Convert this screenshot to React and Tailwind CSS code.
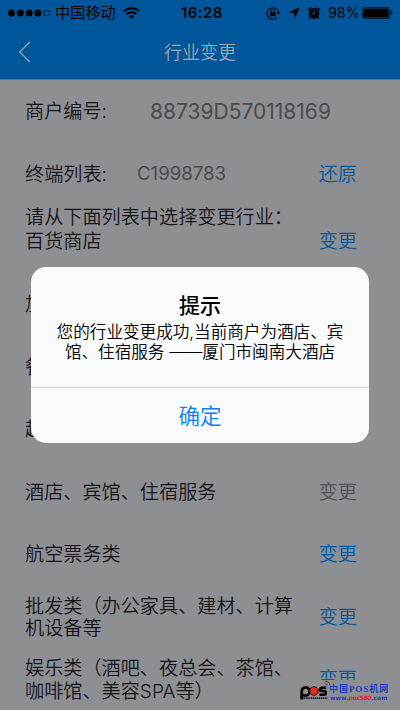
const industries = [
  { name: "加油站" },
  { name: "餐饮类" },
  { name: "超市类" },
  { name: "酒店、宾馆、住宿服务", current: true },
  { name: "航空票务类" },
  { name: "批发类（办公家具、建材、计算机设备等" },
  { name: "娱乐类（酒吧、夜总会、茶馆、咖啡馆、美容SPA等）" },
];

function StatusBar() {
  return (
    <div className="relative h-[26px] flex items-center justify-between pl-[8px] pr-[7px] text-black">
      <div className="flex items-center">
        <svg width="44" height="10" viewBox="0 0 44 10">
          <circle cx="3.5" cy="5" r="3.5" />
          <circle cx="12.3" cy="5" r="3.5" />
          <circle cx="21.1" cy="5" r="3.5" />
          <circle cx="29.9" cy="5" r="3.5" />
          <circle cx="38.7" cy="5" r="3" fill="none" stroke="black" strokeWidth="0.8" />
        </svg>
        <span className="ml-[3px] text-[15.2px] leading-[26px]">中国移动</span>
        <svg className="ml-[7px]" width="17" height="12" viewBox="0 0 17 12" fill="none" stroke="black" strokeWidth="2">
          <path d="M1 4.4a10.6 10.6 0 0 1 15 0" />
          <path d="M3.7 7.2a6.8 6.8 0 0 1 9.6 0" />
          <path d="M8.5 11.8 5.9 9.2a3.7 3.7 0 0 1 5.2 0z" fill="black" stroke="none" />
        </svg>
      </div>
      <span className="absolute left-[181px] font-semibold text-[15px] leading-[26px] tracking-[0.4px]">16:28</span>
      <div className="flex items-center">
        <svg width="15" height="14" viewBox="0 0 15 14" fill="none" stroke="black" strokeWidth="1.1">
          <path d="M10.8 11.4A5.7 5.7 0 1 1 12.3 6.2" />
          <path d="M10.2 6.2h4.4l-2.2 2.8z" fill="black" stroke="none" />
          <path d="M4 6.4h5.4v3.8H4z" fill="black" stroke="none" />
          <path d="M5 6.6V5.2a1.7 1.7 0 0 1 3.4 0v1.4" />
        </svg>
        <svg className="ml-[7px]" width="12" height="12" viewBox="0 0 12 12">
          <path d="M11.8.3 6.9 11.8 6 6.2.4 5.4z" />
        </svg>
        <svg className="ml-[7px]" width="14" height="14" viewBox="0 0 14 14">
          <circle cx="7" cy="7.4" r="5.3" />
          <path d="M1 4.2 4.1 1.4M13 4.2 9.9 1.4" stroke="black" strokeWidth="1.7" />
          <path d="M3.3 11.1 2.1 12.8M10.7 11.1l1.2 1.7" stroke="black" strokeWidth="1.4" />
          <path d="M7.2 4.2v3.6H4.6" fill="none" stroke="#00569b" strokeWidth="1.1" />
        </svg>
        <span className="ml-[7px] w-[31px] text-[14.3px] leading-[26px] whitespace-nowrap">98%</span>
        <svg className="ml-[3px]" width="31" height="12" viewBox="0 0 31 12">
          <rect x="0.4" y="0.4" width="27.2" height="11.2" rx="2" fill="none" stroke="black" strokeWidth="0.7" />
          <rect x="1.5" y="1.5" width="25" height="9" rx="1" />
          <path d="M28.6 3.8c2.4.4 2.4 4 0 4.4z" />
        </svg>
      </div>
    </div>
  );
}

function NavBar() {
  return (
    <div className="relative h-[53px] flex items-center justify-center">
      <svg className="absolute left-[18px] top-[15px]" width="13" height="22" viewBox="0 0 13 22" fill="none" stroke="#a0a4aa" strokeWidth="1.2">
        <path d="M11.8 1 1.8 11l10 10" />
      </svg>
      <h1 className="text-[18px] leading-[53px] font-[350] text-[#a2a4a9]">行业变更</h1>
    </div>
  );
}

function IndustryRow({ name, current }) {
  return (
    <div className="h-[62.6px] flex items-center justify-between">
      <span className="w-[270px] leading-[22.5px]">{name}</span>
      <span className={current ? "text-[#505155]" : "text-[#0059a3]"}>变更</span>
    </div>
  );
}

function SiteMark() {
  return (
    <div className="absolute left-[299px] top-[680px] w-[101px] h-[30px] pl-px flex items-start bg-[#8e8f93]">
      <svg className="shrink-0" width="31" height="22" viewBox="0 0 31 22" fill="none">
        <path d="M1.7 19.5V11.4a4 4 0 1 1 4 4H3" stroke="black" strokeWidth="2.8" />
        <circle cx="14" cy="11" r="4.3" fill="#e02e20" stroke="#35110f" strokeWidth="1" />
        <path d="M26.2 7.7h-4.1c-2.7 0-2.7 3.4 0 3.4h1.7c2.7 0 2.7 3.6 0 3.6h-4.4" stroke="black" strokeWidth="2.5" />
        <path d="M24.5 3.6c1.6-.2 2.5.8 2.6 2M25 1.2c3-.2 4.8 1.8 5 4" stroke="#222" strokeWidth="0.8" />
        <path d="M3.5 18.2h24" stroke="#222" strokeWidth="1.8" strokeDasharray="1.4 0.5" />
      </svg>
      <div className="-ml-[2px] whitespace-nowrap text-[#1f3fc4]">
        <div className="mt-[4px] h-[10px] text-[9px] leading-[10px] font-bold tracking-[0.95px] font-['Liberation_Serif','Noto_Sans_CJK_SC',serif]">中国POS机网</div>
        <div className="ml-[1px] h-[8px] text-[6px] leading-[8px] font-bold font-['DejaVu_Sans',sans-serif]">
          www.<span className="italic text-[#e3201b] tracking-[-0.3px]">pos580</span>.com
        </div>
      </div>
    </div>
  );
}

function AlertDialog() {
  return (
    <div className="absolute left-[31px] top-[267px] w-[338px] h-[176px] rounded-[15px] bg-[#f9fafb] text-black text-center flex flex-col">
      <div className="h-[121px] border-b border-[#d7d8da] pt-[25px]">
        <h2 className="text-[21px] leading-[28px] font-medium">提示</h2>
        <p className="text-[16.6px] leading-[20px] mt-[2px] font-[350]">
          您的行业变更成功,当前商户为酒店、宾
          <br />
          馆、住宿服务 ——厦门市闽南大酒店
        </p>
      </div>
      <button className="flex-1 text-[21.5px] leading-[28px] text-[#087dfa] font-[350]">确定</button>
    </div>
  );
}

export default function App() {
  return (
    <div className="relative w-[400px] h-[710px] overflow-hidden bg-[#8e8f93] font-[Inter,'Noto_Sans_CJK_SC',sans-serif]">
      <header className="h-[80px] bg-[#00569b] border-b border-[#527ba0]">
        <StatusBar />
        <NavBar />
      </header>
      <main className="pl-[25px] pr-[43px] text-[19.15px] font-[350] text-[#151619]">
        <div className="h-[63px] flex items-center">
          <span className="w-[125px]">商户编号:</span>
          <span className="text-[21px] font-normal text-[#4b4c50]">88739D570118169</span>
        </div>
        <div className="h-[62px] flex items-center">
          <span className="w-[112px]">终端列表:</span>
          <span className="text-[18.6px] font-normal text-[#4b4c50]">C1998783</span>
          <span className="ml-auto text-[#0059a3]">还原</span>
        </div>
        <div className="h-[24px] leading-[24px]">请从下面列表中选择变更行业：</div>
        <div className="h-[44px] flex items-start justify-between leading-[25px]">
          <span>百货商店</span>
          <span className="text-[#0059a3]">变更</span>
        </div>
        {industries.map((item) => (
          <IndustryRow key={item.name} {...item} />
        ))}
      </main>
      <SiteMark />
      <AlertDialog />
    </div>
  );
}
